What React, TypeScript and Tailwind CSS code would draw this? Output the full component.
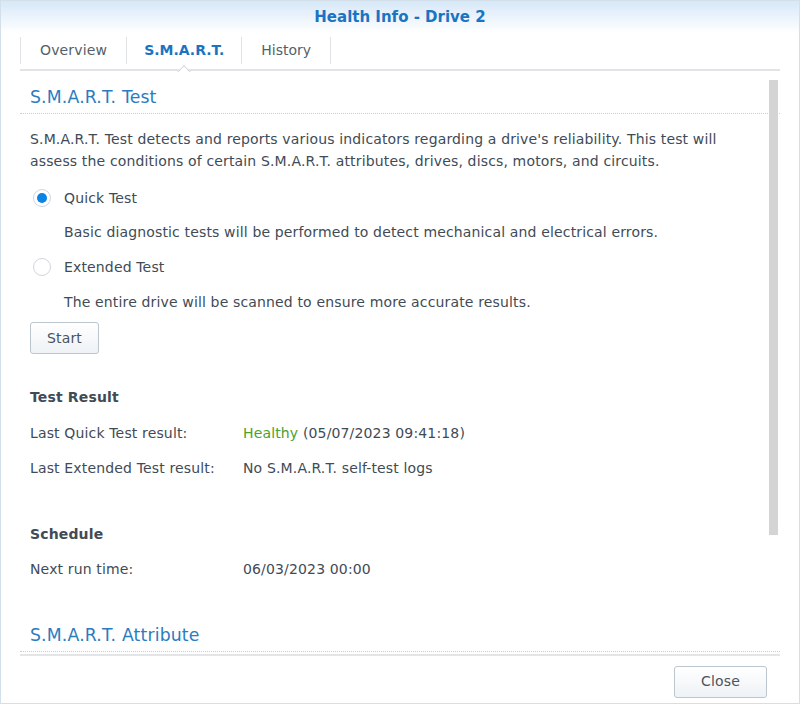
import type { ReactNode } from 'react';

const font = { fontFamily: '"DejaVu Sans", Verdana, sans-serif' };

function Radio({ checked }: { checked?: boolean }) {
  return (
    <span className="flex h-[18px] w-[18px] shrink-0 items-center justify-center rounded-full border border-[#cfd6dd] bg-white">
      {checked && <span className="h-[10px] w-[10px] rounded-full bg-[#0b84e3]" />}
    </span>
  );
}

function Heading({ children }: { children: ReactNode }) {
  return (
    <div className="flex h-[43px] items-end border-b border-dotted border-[#c9cdd1] px-[10px] pb-[6px] text-[17.3px] leading-[20px] text-[#2a7cc0]">
      {children}
    </div>
  );
}

function Row({ label, children }: { label: string; children: ReactNode }) {
  return (
    <div className="flex h-[35px] items-center">
      <div className="w-[213px] shrink-0">{label}</div>
      <div>{children}</div>
    </div>
  );
}

export default function App() {
  return (
    <div
      className="flex h-[704px] w-[800px] flex-col overflow-hidden border border-[#d3dfe9] bg-white text-[14px] tracking-[0.15px] text-[#414b56]"
      style={font}
    >
      {/* Title bar */}
      <div className="flex h-[32px] shrink-0 items-center justify-center bg-gradient-to-b from-[#d7e8f8] to-white text-[15px] font-bold tracking-normal text-[#1b74c1]">
        Health Info - Drive 2
      </div>

      {/* Tabs */}
      <div className="mx-[19px] flex h-[38px] shrink-0 items-start border-b-2 border-[#e1e4e7]">
        <div className="mt-[4px] flex h-[27px] items-center border-l border-[#e0e3e6] px-[19px] text-[#555f69]">
          Overview
        </div>
        <div className="relative mt-[4px] flex h-[27px] items-center border-l border-[#e0e3e6] px-[17px] font-bold tracking-normal text-[#1b74c1]">
          S.M.A.R.T.
          <span className="absolute bottom-[-12px] left-1/2 h-[9px] w-[9px] -translate-x-1/2 rotate-45 border-l border-t border-[#d3d7db] bg-white" />
        </div>
        <div className="mt-[4px] flex h-[27px] items-center border-x border-[#e0e3e6] px-[19px] tracking-normal text-[#555f69]">
          History
        </div>
      </div>

      {/* Scroll area */}
      <div className="relative mx-[19px] min-h-0 flex-1 overflow-hidden border-b-2 border-[#e3e5e7]">
        <Heading>S.M.A.R.T. Test</Heading>
        <div className="pl-[10px] pr-[24px]">
          <p className="mt-[14px] leading-[22px]">
            S.M.A.R.T. Test detects and reports various indicators regarding a drive's reliability. This test will
            assess the conditions of certain S.M.A.R.T. attributes, drives, discs, motors, and circuits.
          </p>
          <div className="mt-[8px] flex h-[36px] items-center gap-[13px] pl-[3px]">
            <Radio checked />
            <span>Quick Test</span>
          </div>
          <div className="flex h-[32px] items-center pl-[34px]">
            Basic diagnostic tests will be performed to detect mechanical and electrical errors.
          </div>
          <div className="flex h-[38px] items-center gap-[13px] pl-[3px]">
            <Radio />
            <span>Extended Test</span>
          </div>
          <div className="flex h-[32px] items-center pl-[34px]">
            The entire drive will be scanned to ensure more accurate results.
          </div>
          <button className="mt-[4px] h-[32px] w-[69px] rounded-[3px] border border-[#bcc6cf] bg-gradient-to-b from-white to-[#eef2f6] text-[14px] text-[#4a545e]">
            Start
          </button>

          <div className="mt-[33px] flex h-[20px] items-center font-bold">Test Result</div>
          <div className="mt-[9px]">
            <Row label="Last Quick Test result:">
              <span className="text-[#4aa12f]">Healthy</span> (05/07/2023 09:41:18)
            </Row>
            <Row label="Last Extended Test result:">No S.M.A.R.T. self-test logs</Row>
          </div>

          <div className="mt-[38px] flex h-[20px] items-center font-bold">Schedule</div>
          <div className="mt-[8px]">
            <Row label="Next run time:">06/03/2023 00:00</Row>
          </div>
        </div>
        <div className="mt-[22px]">
          <Heading>S.M.A.R.T. Attribute</Heading>
        </div>
        <div className="absolute right-[2px] top-[9px] h-[455px] w-[9px] bg-[#d4d4d4]" />
      </div>

      {/* Footer */}
      <div className="flex h-[47px] shrink-0 items-center justify-end pr-[32px] pt-[4px]">
        <button className="h-[32px] w-[93px] rounded-[3px] border border-[#bcc6cf] bg-gradient-to-b from-white to-[#eef2f6] text-[14px] text-[#4a545e]">
          Close
        </button>
      </div>
    </div>
  );
}
